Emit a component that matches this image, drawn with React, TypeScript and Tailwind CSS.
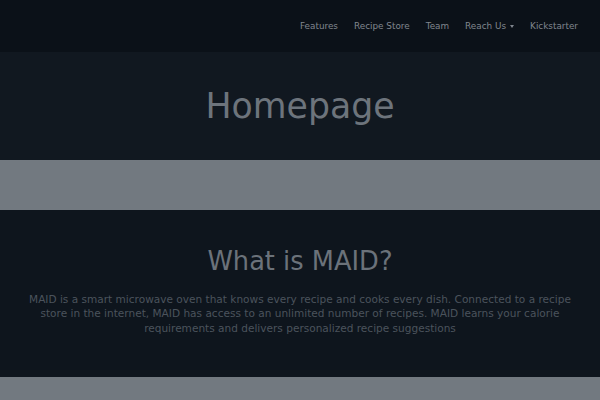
import React from 'react';

const navItems = ['Features', 'Recipe Store', 'Team', 'Reach Us', 'Kickstarter'];

export default function App() {
  return (
    <div className="min-h-screen bg-[#0e151d] font-['DejaVu_Sans',sans-serif]">
      <nav className="h-[52px] bg-[#0b1118] flex items-center justify-end pr-[22px] pt-[1px]">
        <ul className="flex items-center gap-[16px] text-[8.85px] text-[#80868e]">
          {navItems.map((item) => (
            <li key={item} className="flex items-center">
              {item}
              {item === 'Reach Us' && (
                <span className="ml-[4px] inline-block w-0 h-0 border-l-[2.5px] border-r-[2.5px] border-t-[3px] border-l-transparent border-r-transparent border-t-[#80868e]" />
              )}
            </li>
          ))}
        </ul>
      </nav>

      <header className="h-[108px] bg-[#111820] flex items-center justify-center">
        <h1 className="text-[34.7px] text-[#6d747c] leading-none">Homepage</h1>
      </header>

      <div className="h-[50px] bg-[#727980]" />

      <section className="h-[167px] bg-[#0e151d] flex flex-col items-center pt-[39px]">
        <h2 className="text-[25.7px] text-[#6b727a] leading-none">What is MAID?</h2>
        <p className="mt-[17px] w-[550px] text-center text-[10.55px] leading-[14.5px] text-[#4b535c]">
          MAID is a smart microwave oven that knows every recipe and cooks every dish. Connected to a recipe store in the internet, MAID has access to an unlimited number of recipes. MAID learns your calorie requirements and delivers personalized recipe suggestions
        </p>
      </section>

      <div className="h-[50px] bg-[#727980]" />
    </div>
  );
}
